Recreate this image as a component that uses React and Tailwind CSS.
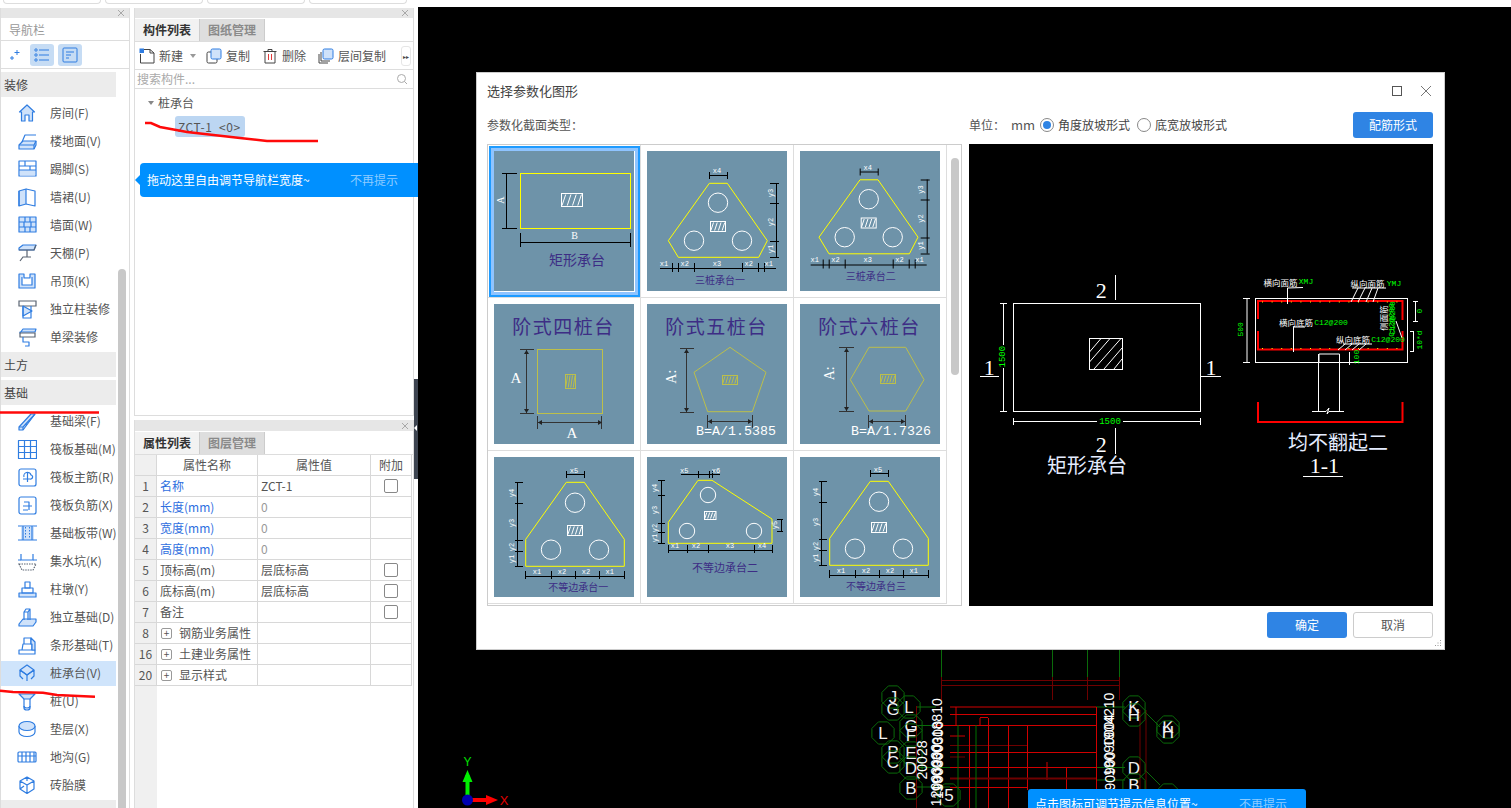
import React from "react";

const BLUE = "#2f7de1";
const LIGHT = "#cfe2fa";

function NavIcon({ name }) {
  const p = { fill: "none", stroke: BLUE, strokeWidth: 1.2, strokeLinejoin: "round" };
  const f = { fill: LIGHT, stroke: BLUE, strokeWidth: 1.2, strokeLinejoin: "round" };
  const g = { fill: "none", stroke: "#5a6472", strokeWidth: 1.2 };
  const shapes = {
    room: <path {...f} d="M10 2 L2.5 9 L4.5 9 V18 H8 V12 H12 V18 H15.5 V9 H17.5 Z" />,
    floor: <><path {...p} d="M5 11 L8 4 H19" /><path {...f} d="M2 14 L6 10 H19 V14 L17 18 H2 Z" /><path {...p} d="M2 14 H17 V18 M17 14 L19 10" /></>,
    skirt: <><rect {...p} x="2" y="2" width="17" height="15" /><rect fill={LIGHT} x="3" y="11" width="15" height="5.5" /><path {...p} d="M2 7 H19 M2 11 H19 M8 2 V7 M13 7 V11" /></>,
    dado: <><path {...f} d="M2 4 L9 2 V17 L2 19 Z" /><path {...p} d="M9 2 L18 4 V19 L9 17 M2 4 V19" /></>,
    wall: <><rect {...f} x="2" y="2" width="17" height="15" /><path {...p} d="M2 7 H19 M2 12 H19 M8 2 V7 M13 2 V7 M7 7 V12 M14 7 V12 M8 12 V17 M13 12 V17" /></>,
    ceil: <><path {...f} d="M2 5 L6 2 H19 L17 7 H2 Z" /><path {...g} d="M2 7 H17 L19 2 M10 7 V14 M3 18 L6 14 H14" /></>,
    hang: <path {...f} d="M2 3 H7 V7 H13 V3 H18 V17 H2 Z M5 6 V14 H15 V6" />,
    col: <><path {...g} d="M2 2 H19 V7 H2 Z" /><path {...f} d="M6 7 L15 12 L6 17 Z" /><path {...p} d="M6 7 V19 H14 V7" /></>,
    beamd: <><path {...f} d="M3 6 L6 2 H19 L18 5 H3 Z" /><path {...g} d="M3 6 H18 V10 H3 Z" /><path {...p} d="M6 10 V15 H12 V19 H8" /></>,
    beam: <><path {...f} d="M2 16 L14 3 H18 L6 19 H2 Z" /><path {...p} d="M6 16 L18 3 M2 16 H6 V19 M8 13 L10 14" /></>,
    raft: <><rect {...p} x="1.5" y="1.5" width="18" height="18" /><path {...p} d="M7.5 1.5 V19.5 M13.5 1.5 V19.5 M1.5 7.5 H19.5 M1.5 13.5 H19.5" /></>,
    main: <><rect {...p} x="2" y="2" width="17" height="17" rx="2" /><path {...p} d="M10.5 5 V15 M7 10 A3 3 0 0 1 14 8 A2 2 0 0 1 13 12 H6" /></>,
    neg: <><rect {...p} x="2" y="2" width="17" height="17" rx="2" /><path {...p} d="M7 7 H12 V15 M6 11 H15 M6 15 H11" /></>,
    strip: <><rect fill={LIGHT} x="4" y="4" width="13" height="13" /><path {...p} d="M1 3 H20 M1 17 H20 M6 3 V17 M15 3 V17" /><path d="M8.5 4 V16 M12.5 4 V16" stroke={BLUE} strokeDasharray="1.5 1.5" /></>,
    pit: <><path {...p} d="M4 3 V9 H16 V3" /><path {...g} d="M2 13 H19 L16 19 H5 Z" strokeDasharray="1.5 1" /><path {...p} d="M1 9 H4 M16 9 H20" /></>,
    pier: <><rect {...f} x="2" y="14" width="17" height="4" /><rect {...p} x="5" y="9" width="11" height="5" /><rect {...p} x="8" y="3" width="5" height="6" /></>,
    iso: <><path {...f} d="M2 17 L6 12 H19 V15 L16 19 H2 Z" /><path {...p} d="M7 13 V5 L9 2 H13 V13 M7 5 H11 V13 M11 5 L13 2" /></>,
    bar: <><path {...p} d="M2 15 H18 V19 H2 Z M5 15 L6 9 H15 V15 M7 9 V3 H14 V9" /><path {...f} d="M14 3 L18 7 V15 H15 V9 H14 Z" /></>,
    cap: <><path {...f} d="M10 2 L17 7 L10 12 L3 7 Z" /><path {...p} d="M3 7 V13 L6 16 M17 7 V13 L14 16 M10 12 V18 M3 7 L10 12 L17 7" /></>,
    pile: <><path {...f} d="M2 3 H18 L13 8 H7 Z" /><path {...p} d="M7 8 V17 A3 2 0 0 0 13 17 V8" /><path {...p} d="M7 15 A3 2 0 0 0 13 15" /></>,
    pad: <><path {...p} d="M2 7 V13 A8 4.5 0 0 0 18 13 V7" /><ellipse {...f} cx="10" cy="7" rx="8" ry="4.5" /></>,
    ditch: <><rect {...p} x="1" y="5" width="18" height="10" rx="1" /><path {...p} d="M1 9 H19 M5 5 V15 M9 5 V15 M13 5 V15 M17 5 V15" /></>,
    brick: <path {...p} d="M10 2 L17 6 V14 L10 18.5 L3 14 V6 Z M3 6 L10 10 L17 6 M10 10 V18.5 M10 2 V6 M3 14 L7 11" />,
  };
  return <svg viewBox="0 0 20 20" className="w-[20px] h-[20px] block shrink-0">{shapes[name]}</svg>;
}

function Section({ label, className = "" }) {
  return <div className={`w-[115px] h-[25px] bg-[#ececec] pl-[3px] text-[12px] leading-[25px] text-[#444] ${className}`}>{label}</div>;
}

function Item({ icon, label, active }) {
  return (
    <div className="h-[28px] flex items-center">
      <div className={`w-[115px] h-[25px] flex items-center overflow-hidden pl-[16px] text-[12px] text-[#555] whitespace-nowrap ${active ? "bg-[#cfe4fb]" : ""}`}>
        <NavIcon name={icon} />
        <span className="ml-[13px]">{label}</span>
      </div>
    </div>
  );
}

function Close() {
  return (
    <svg viewBox="0 0 8 8" className="w-[8px] h-[8px] block">
      <path d="M1 1 L7 7 M7 1 L1 7" stroke="#a8a8a8" strokeWidth="1" />
    </svg>
  );
}

function PanelBar({ className = "h-[10px]" }) {
  return <div className={`bg-[#e6e6e6] flex items-center justify-end pr-[4px] shrink-0 ${className}`}><Close /></div>;
}

function NavPanel() {
  const a = [["room", "房间(F)"], ["floor", "楼地面(V)"], ["skirt", "踢脚(S)"], ["dado", "墙裙(U)"], ["wall", "墙面(W)"], ["ceil", "天棚(P)"], ["hang", "吊顶(K)"], ["col", "独立柱装修"], ["beamd", "单梁装修"]];
  const b = [["beam", "基础梁(F)"], ["raft", "筏板基础(M)"], ["main", "筏板主筋(R)"], ["neg", "筏板负筋(X)"], ["strip", "基础板带(W)"], ["pit", "集水坑(K)"], ["pier", "柱墩(Y)"], ["iso", "独立基础(D)"], ["bar", "条形基础(T)"], ["cap", "桩承台(V)", true], ["pile", "桩(U)"], ["pad", "垫层(X)"], ["ditch", "地沟(G)"], ["brick", "砖胎膜"]];
  return (
    <div className="relative w-[130px] shrink-0 flex flex-col border-x border-[#ddd] overflow-hidden">
      <PanelBar />
      <div className="h-[23px] shrink-0 border-b border-[#ddd] pl-[8px] text-[12px] leading-[23px] text-[#999]">导航栏</div>
      <div className="h-[28px] shrink-0 border-b border-[#ddd] flex items-center">
        <svg viewBox="0 0 14 14" className="w-[14px] h-[14px] ml-[7px]">
          <path d="M9 2 V7 M6.5 4.5 H11.5 M4 8 V12 M2 10 H6" stroke={BLUE} strokeWidth="1" />
        </svg>
        <div className="ml-[8px] w-[24px] h-[22px] rounded-[3px] bg-[#c6dcf4] flex items-center justify-center">
          <svg viewBox="0 0 16 14" className="w-[16px] h-[14px]">
            <path d="M5 2 H15 M5 7 H15 M5 12 H15" stroke={BLUE} strokeWidth="1" />
            <circle cx="2" cy="2" r="1.2" fill="none" stroke={BLUE} />
            <circle cx="2" cy="7" r="1.2" fill="none" stroke={BLUE} />
            <circle cx="2" cy="12" r="1.2" fill="none" stroke={BLUE} />
          </svg>
        </div>
        <div className="ml-[4px] w-[24px] h-[22px] rounded-[3px] bg-[#c6dcf4] flex items-center justify-center">
          <svg viewBox="0 0 16 16" className="w-[16px] h-[16px]">
            <rect x="1" y="1" width="14" height="14" rx="1" fill="none" stroke={BLUE} />
            <path d="M4 5 H12 M4 8 H9 M4 11 H7" stroke={BLUE} />
          </svg>
        </div>
      </div>
      <div className="pt-[3px]">
        <Section label="装修" />
        <div className="mt-[2px]">{a.map(([i, l]) => <Item key={l} icon={i} label={l} />)}</div>
        <Section label="土方" className="mt-[1px]" />
        <Section label="基础" className="mt-[3px]" />
        <div className="mt-[2px]">{b.map(([i, l, s]) => <Item key={l} icon={i} label={l} active={s} />)}</div>
        <Section label="" className="mt-[1px]" />
      </div>
      <div className="absolute left-[117px] top-[261px] bottom-0 w-[8px] bg-[#c8c8c8] rounded-t-[4px]" />
    </div>
  );
}

function Tabs({ a, b }) {
  return (
    <div className="h-[23px] shrink-0 flex border-b border-[#ddd] mt-[1px]">
      <div className="w-[65px] bg-[#f2f2f2] border-r border-[#ccc] text-center text-[12px] leading-[22px] font-bold text-[#333]">{a}</div>
      <div className="w-[65px] bg-[#dedede] border-r border-[#ccc] text-center text-[12px] leading-[22px] font-bold text-[#8a8a8a]">{b}</div>
    </div>
  );
}

function Toolbar() {
  return (
    <div className="relative h-[28px] shrink-0 border-b border-[#ddd] flex items-center pl-[4px] text-[12px] text-[#555] whitespace-nowrap">
      <svg viewBox="0 0 16 16" className="w-[16px] h-[16px]">
        <path d="M4 1.5 H11 L15 5 V15 H1.5 V6" fill="none" stroke="#444" />
        <path d="M11 1.5 V5 H15" fill="none" stroke="#444" />
        <rect x="0.5" y="0.5" width="4.5" height="4.5" fill={BLUE} />
      </svg>
      <span className="ml-[4px]">新建</span>
      <span className="ml-[7px] w-0 h-0 border-x-[3px] border-x-transparent border-t-[4px] border-t-[#999]" />
      <svg viewBox="0 0 16 16" className="w-[16px] h-[16px] ml-[10px]">
        <rect x="1" y="4" width="10" height="11" rx="1.5" fill="none" stroke="#444" />
        <rect x="5" y="1" width="10" height="10" rx="1.5" fill={LIGHT} stroke={BLUE} />
      </svg>
      <span className="ml-[4px]">复制</span>
      <svg viewBox="0 0 16 16" className="w-[16px] h-[16px] ml-[12px]">
        <path d="M1.5 3.5 H14.5 M6 3.5 V1.5 H10 V3.5 M3 3.5 V15 H13 V3.5" fill="none" stroke="#444" />
        <path d="M6.5 6 V12 M9.5 6 V12" stroke="#e23b3b" />
      </svg>
      <span className="ml-[4px]">删除</span>
      <svg viewBox="0 0 16 16" className="w-[16px] h-[16px] ml-[12px]">
        <path d="M1 6 V15 H10 M3 4 V13 H12" fill="none" stroke="#444" />
        <rect x="5" y="1" width="10" height="10" rx="1.5" fill={LIGHT} stroke={BLUE} />
      </svg>
      <span className="ml-[4px]">层间复制</span>
      <div className="absolute right-[2px] top-[4px] w-[10px] h-[20px] rounded-[3px] bg-white border border-[#e6e6e6] flex items-center justify-center text-[6px] text-[#444]">▸▸</div>
    </div>
  );
}

function ComponentList() {
  return (
    <div className="relative h-[408px] shrink-0 flex flex-col border-x border-[#ddd] border-b">
      <PanelBar />
      <Tabs a="构件列表" b="图纸管理" />
      <Toolbar />
      <div className="h-[19px] shrink-0 border-b border-[#ddd] flex items-center justify-between pl-[2px] pr-[5px] text-[12px] text-[#aaa]">
        <span>搜索构件...</span>
        <svg viewBox="0 0 12 12" className="w-[12px] h-[12px]">
          <circle cx="5.5" cy="5.5" r="4" fill="none" stroke="#aaa" />
          <path d="M8.5 8.5 L11 11" stroke="#aaa" />
        </svg>
      </div>
      <div className="pl-[13px] pt-[5px] flex items-center text-[12px] text-[#555]">
        <span className="w-0 h-0 border-x-[3px] border-x-transparent border-t-[4px] border-t-[#888]" />
        <span className="ml-[4px]">桩承台</span>
      </div>
      <div className="ml-[40px] mt-[4px] w-[70px] h-[21px] rounded-[3px] bg-[#bcd6f2] pl-[3px] text-[12px] leading-[21px] text-[#555] whitespace-pre tracking-[0.6px]">ZCT-1  &lt;0&gt;</div>
      <div className="absolute left-0 top-[155px] w-[284px] h-[34px] flex items-center">
        <span className="w-0 h-0 border-y-[5px] border-y-transparent border-r-[5px] border-r-[#0090ff]" />
        <div className="flex-1 h-full bg-[#0090ff] rounded-l-[4px] flex items-center justify-between pl-[7px] pr-[21px] text-[12px] text-white">
          <span>拖动这里自由调节导航栏宽度~</span>
          <span className="text-[#8ccbff]">不再提示</span>
        </div>
      </div>
    </div>
  );
}

function PropTable() {
  const rows = [
    ["1", "名称", "ZCT-1", true, "blue", false],
    ["2", "长度(mm)", "0", false, "blue", true],
    ["3", "宽度(mm)", "0", false, "blue", true],
    ["4", "高度(mm)", "0", false, "blue", true],
    ["5", "顶标高(m)", "层底标高", true, "", false],
    ["6", "底标高(m)", "层底标高", true, "", false],
    ["7", "备注", "", true, "", false],
    ["8", "钢筋业务属性", "", false, "plus", false],
    ["16", "土建业务属性", "", false, "plus", false],
    ["20", "显示样式", "", false, "plus", false],
  ];
  const cell = "border-b border-r border-[#d8d8d8] h-[21px] flex items-center";
  return (
    <div className="flex-1 min-h-0 flex flex-col border-x border-[#ddd]">
      <PanelBar className="h-[11px]" />
      <Tabs a="属性列表" b="图层管理" />
      <div className="w-[277px] grid grid-cols-[22px_101px_113px_41px] text-[12px] text-[#555]">
        <div className={`${cell} bg-[#f0f0f0]`} />
        <div className={`${cell} justify-center`}>属性名称</div>
        <div className={`${cell} justify-center`}>属性值</div>
        <div className={`${cell} justify-center`}>附加</div>
        {rows.map(([n, name, val, chk, kind, dim]) => (
          <React.Fragment key={n}>
            <div className={`${cell} bg-[#f0f0f0] justify-center`}>{n}</div>
            <div className={`${cell} pl-[3px] ${kind === "blue" ? "text-[#2f6fe0]" : ""}`}>
              {kind === "plus" && <span className="w-[11px] h-[11px] mr-[7px] ml-[1px] border border-[#999] rounded-[2px] flex items-center justify-center text-[10px] leading-none">+</span>}
              {name}
            </div>
            <div className={`${cell} pl-[3px] ${dim ? "text-[#999]" : ""}`}>{val}</div>
            <div className={`${cell} justify-center`}>{chk && <span className="w-[14px] h-[14px] border border-[#888] rounded-[2px] bg-white" />}</div>
          </React.Fragment>
        ))}
      </div>
      <div className="w-[22px] flex-1 bg-[#f0f0f0]" />
    </div>
  );
}

const Y = "#ffff00";
const DY = "#bcbf4a";
const NAVY = "#3d2d85";
const SONG = "'Liberation Serif','Noto Sans CJK SC',serif";
const MONO = "'Liberation Mono',monospace";

function Lines({ d, c = "#000", w = 1 }) {
  return d.map((l, i) => <line key={i} x1={l[0]} y1={l[1]} x2={l[2]} y2={l[3]} stroke={c} strokeWidth={w} />);
}
function T({ x, y, s = 7, c = "#fff", r, f = MONO, children, ...rest }) {
  return (
    <text x={x} y={y} fontSize={s} fill={c} fontFamily={f} textAnchor="middle" dominantBaseline="central" transform={r ? `rotate(${r} ${x} ${y})` : undefined} {...rest}>
      {children}
    </text>
  );
}
function Hatch({ x, y, w, h, c = "#fff", n = 3 }) {
  const step = w / (n + 1);
  const ls = [];
  for (let i = 1; i <= n + 1; i++) ls.push([x + step * i - step * 0.2, y + 1, x + step * i - step * 0.9, y + h - 1]);
  return (
    <>
      <rect x={x} y={y} width={w} height={h} fill="none" stroke={c} />
      <Lines d={ls} c={c} />
    </>
  );
}
function Circles({ d, r = 9.7 }) {
  return d.map((p, i) => <circle key={i} cx={p[0]} cy={p[1]} r={r} fill="none" stroke="#fff" />);
}
function Poly({ p, c = Y }) {
  return <polygon points={p} fill="none" stroke={c} />;
}
function Thumb({ children }) {
  return <svg viewBox="0 0 140 140" className="w-[140px] h-[140px] block bg-[#6e93a9]">{children}</svg>;
}

function T1() {
  return (
    <Thumb>
      <rect x="26.5" y="22.5" width="110" height="55" fill="none" stroke={Y} />
      <Hatch x={67.5} y={42.5} w={21} h={13} />
      <Lines d={[[12.5, 22, 12.5, 77], [8, 22.5, 23, 22.5], [8, 77.5, 23, 77.5], [26, 91.5, 137, 91.5], [26.5, 82, 26.5, 96], [136.5, 82, 136.5, 96]]} />
      <T x={6} y={49} s={10} r={-90} f={SONG}>A</T>
      <T x={80.7} y={84} s={10} f={SONG}>B</T>
      <T x={83} y={108} s={14} c={NAVY} f="'Noto Sans CJK SC',sans-serif">矩形承台</T>
    </Thumb>
  );
}
function ThreePile({ title }) {
  return (
    <>
      <Poly p="62.3,32.3 80.3,32.3 120.3,89.7 111.7,106.3 31.3,106.3 21.3,89.7" />
      <Circles d={[[71, 51.7], [47, 89.7], [95, 89.7]]} />
      <Hatch x={63.5} y={70.5} w={15} h={10} />
      <Lines d={[[62.5, 24.5, 80.5, 24.5], [62.5, 21, 62.5, 28], [80.5, 21, 80.5, 28], [129.5, 32, 129.5, 106], [123, 32.5, 132, 32.5], [123, 52.5, 132, 52.5], [123, 90.5, 132, 90.5], [123, 106.5, 132, 106.5], [13, 117.5, 129, 117.5], [25.5, 112, 25.5, 121], [31.5, 112, 31.5, 121], [47.5, 112, 47.5, 121], [95.5, 112, 95.5, 121], [111.5, 112, 111.5, 121], [117.5, 112, 117.5, 121]]} />
      <T x={70} y={20}>x4</T>
      <T x={123.7} y={42} r={-90}>y3</T>
      <T x={123.7} y={71} r={-90}>y2</T>
      <T x={123.7} y={98} r={-90}>y1</T>
      <T x={17} y={112.7}>x1</T>
      <T x={37.7} y={112.7}>x2</T>
      <T x={70} y={112.7}>x3</T>
      <T x={101.7} y={112.7}>x2</T>
      <T x={121.7} y={112.7}>x1</T>
      <T x={73} y={128} s={10} c={NAVY} f="'Noto Sans CJK SC',sans-serif">{title}</T>
    </>
  );
}
function T2() {
  return <Thumb><ThreePile title="三桩承台一" /></Thumb>;
}
function T3() {
  return <Thumb><g transform="translate(-2.3 -3.5)"><ThreePile title="三桩承台二" /></g></Thumb>;
}
function Head({ children }) {
  return <T x={69.5} y={21.7} s={19} c={NAVY} f="'Noto Sans CJK SC',sans-serif" letterSpacing="1.5">{children}</T>;
}
function Arrows({ d }) {
  return d.map((p, i) => <polygon key={i} points={p} fill="#222" />);
}
function T4() {
  return (
    <Thumb>
      <Head>阶式四桩台</Head>
      <rect x="43.5" y="45.5" width="65" height="64" fill="none" stroke={DY} />
      <Hatch x={71.5} y={70.5} w={10} h={14} c={DY} n={3} />
      <Lines c="#333" d={[[32.5, 46, 32.5, 109], [26, 45.5, 40, 45.5], [26, 109.5, 40, 109.5], [44, 118.5, 108, 118.5], [43.5, 112, 43.5, 125], [107.5, 112, 107.5, 125]]} />
      <Arrows d={["32.5,46 30,50 35,50", "32.5,109 30,105 35,105", "44,118.5 48,116 48,121", "108,118.5 104,116 104,121"]} />
      <T x={22} y={74} s={15} f={SONG}>A</T>
      <T x={78} y={129} s={15} f={SONG}>A</T>
    </Thumb>
  );
}
function T5() {
  return (
    <Thumb>
      <Head>阶式五桩台</Head>
      <Poly c={DY} p="83,43.3 119,68.3 105.3,107.7 60.7,107.7 47,68.3" />
      <Hatch x={75.5} y={71.5} w={15} h={9} c={DY} n={4} />
      <Lines c="#333" d={[[39.5, 45, 39.5, 108], [33, 44.5, 47, 44.5], [33, 108.5, 47, 108.5], [61, 117.5, 105, 117.5], [60.5, 111, 60.5, 124], [105.5, 111, 105.5, 124]]} />
      <Arrows d={["39.5,45 37,49 42,49", "39.5,108 37,104 42,104", "61,117.5 65,115 65,120", "105,117.5 101,115 101,120"]} />
      <T x={24.7} y={72.7} s={14} r={-90} f={SONG}>A:</T>
      <T x={89} y={127.5} s={13.3}>B=A/1.5385</T>
    </Thumb>
  );
}
function T6() {
  return (
    <Thumb>
      <Head>阶式六桩台</Head>
      <Poly c={DY} p="69,43.3 105.7,43.3 124,75.7 105.7,107 69,107 50.3,75.7" />
      <Hatch x={80.5} y={70.5} w={15} h={9} c={DY} n={4} />
      <Lines c="#333" d={[[46.5, 44, 46.5, 107], [39, 43.5, 54, 43.5], [39, 107.5, 54, 107.5], [69, 117.5, 105, 117.5], [68.5, 111, 68.5, 124], [105.5, 111, 105.5, 124]]} />
      <Arrows d={["46.5,44 44,48 49,48", "46.5,107 44,103 49,103", "69,117.5 73,115 73,120", "105,117.5 101,115 101,120"]} />
      <T x={30} y={69.3} s={14} r={-90} f={SONG}>A:</T>
      <T x={91} y={127.5} s={13.3}>B=A/1.7326</T>
    </Thumb>
  );
}
function Uneven({ title, tx, ty, hx, hy }) {
  return (
    <>
      <Poly p="72.3,25.3 90.3,25.3 130.3,82.3 130.3,109.3 31.7,109.3 31.7,82.3" />
      <Circles d={[[81, 45.7], [57, 92.7], [105, 92.7]]} />
      <Hatch x={hx} y={hy} w={15} h={10} />
      <Lines d={[[72.5, 17.5, 90.5, 17.5], [72.5, 14, 72.5, 21], [90.5, 14, 90.5, 21], [23.5, 25, 23.5, 109], [21, 25.5, 29, 25.5], [21, 46.5, 29, 46.5], [21, 83.5, 29, 83.5], [21, 94.5, 29, 94.5], [21, 109.5, 29, 109.5], [32, 119.5, 130, 119.5], [31.5, 114, 31.5, 122], [57.5, 114, 57.5, 122], [81.5, 114, 81.5, 122], [105.5, 114, 105.5, 122], [130.5, 114, 130.5, 122]]} />
      <T x={80} y={14.2}>x5</T>
      <T x={17.7} y={36} r={-90}>y4</T>
      <T x={17.7} y={66} r={-90}>y3</T>
      <T x={17.7} y={90} r={-90}>y2</T>
      <T x={17.7} y={102} r={-90}>y1</T>
      <T x={43} y={114.7}>x1</T>
      <T x={68} y={114.7}>x2</T>
      <T x={92} y={114.7}>x2</T>
      <T x={115.7} y={114.7}>x1</T>
      <T x={tx} y={ty} s={10} c={NAVY} f="'Noto Sans CJK SC',sans-serif">{title}</T>
    </>
  );
}
function T7() {
  return <Thumb><Uneven title="不等边承台一" tx={84.3} ty={129.7} hx={73.5} hy={68.5} /></Thumb>;
}
function T8() {
  return (
    <Thumb>
      <Poly p="51,23.3 65,23.3 125,62 125,86.3 21.3,86.3 21.3,65.3" />
      <Circles r={7.7} d={[[61, 38], [40, 74], [107, 74]]} />
      <Hatch x={57.5} y={54.5} w={11.5} h={8} />
      <Lines d={[[34, 17.5, 73, 17.5], [51.5, 14, 51.5, 21], [62.5, 14, 62.5, 21], [65.5, 14, 65.5, 21], [14.5, 23, 14.5, 86], [11, 23.5, 18, 23.5], [11, 38.5, 18, 38.5], [11, 66.5, 18, 66.5], [11, 75.5, 18, 75.5], [11, 86.5, 18, 86.5], [134.5, 62, 134.5, 74], [130, 62.5, 136, 62.5], [130, 74.5, 136, 74.5], [21, 93.5, 125, 93.5], [21.5, 88, 21.5, 96], [40.5, 88, 40.5, 96], [61.5, 88, 61.5, 96], [107.5, 88, 107.5, 96], [125.5, 88, 125.5, 96]]} />
      <T x={37.3} y={13.7}>x5</T>
      <T x={69} y={13.7}>x6</T>
      <T x={8} y={31} r={-90}>y4</T>
      <T x={8} y={53} r={-90}>y3</T>
      <T x={8} y={71} r={-90}>y2</T>
      <T x={8} y={81} r={-90}>y1</T>
      <T x={128} y={68} r={-90}>y5</T>
      <T x={28} y={89}>x1</T>
      <T x={49} y={89}>x2</T>
      <T x={83} y={89}>x3</T>
      <T x={115} y={89}>x4</T>
      <T x={78} y={110.3} s={11} c={NAVY} f="'Noto Sans CJK SC',sans-serif">不等边承台二</T>
    </Thumb>
  );
}
function T9() {
  return <Thumb><g transform="translate(-2 -1)"><Uneven title="不等边承台三" tx={78} ty={129.7} hx={73.5} hy={66.5} /></g></Thumb>;
}

function Preview() {
  const G = "#00ff00";
  const R = "#ff0000";
  const CJK = "'Noto Sans CJK SC',sans-serif";
  const dots = [];
  for (let x = 1262; x < 1402; x += 9.6) {
    dots.push(<rect key={"a" + x} x={x} y={301.5} width="1" height="1" fill={Y} />);
    dots.push(<rect key={"b" + x} x={x} y={348} width="1" height="1" fill={Y} />);
  }
  return (
    <svg viewBox="969 144 464 462" className="w-[464px] h-[462px] block bg-black">
      <rect x="1013.5" y="303.5" width="187" height="108" fill="none" stroke="#fff" />
      <rect x="1089.5" y="338.5" width="33" height="31" fill="none" stroke="#fff" />
      <Lines c="#fff" d={[[1089.5, 352, 1101, 338.5], [1089.5, 362, 1110, 338.5], [1094, 369, 1121, 338.5], [1104, 369, 1122, 348], [1114, 369, 1122, 359]]} />
      <Lines c="#fff" d={[[1115.5, 275, 1115.5, 300], [980, 376.5, 999, 376.5], [1201, 376.5, 1221, 376.5], [1115.5, 428, 1115.5, 454], [1003.5, 303, 1003.5, 345], [1003.5, 368, 1003.5, 412], [1000, 303.5, 1007, 303.5], [1000, 411.5, 1007, 411.5], [1013, 421.5, 1097, 421.5], [1123, 421.5, 1201, 421.5], [1013.5, 418, 1013.5, 425], [1200.5, 418, 1200.5, 425]]} />
      <T x={1101.3} y={290} s={22} f={SONG}>2</T>
      <T x={989.3} y={367} s={22} f={SONG}>1</T>
      <T x={1211} y={367} s={22} f={SONG}>1</T>
      <T x={1101.3} y={444} s={22} f={SONG}>2</T>
      <T x={1003.5} y={356.7} s={9} c={G} r={-90}>1500</T>
      <T x={1110} y={422} s={9} c={G}>1500</T>
      <T x={1087} y={464} s={20} c="#e4ecff" f={CJK}>矩形承台</T>

      <rect x="1255.5" y="298.5" width="152" height="64" fill="none" stroke="#fff" />
      <path d="M1258 319 V301 H1402.5 V320 M1258 331 V349.5 H1402.5 V331" fill="none" stroke={R} strokeWidth="2" />
      {dots}
      <path d="M1319 362 V354 H1339.5 V411" fill="none" stroke="#fff" />
      <path d="M1318.5 354 V411.5 M1312 411.5 H1326 L1329 408 L1327 414 L1329 411.5 H1344" fill="none" stroke="#fff" />
      <path d="M1258 402 V422 H1402.5 V402" fill="none" stroke={R} strokeWidth="2" />
      <Lines c="#fff" d={[[1287.5, 288, 1303, 287.5], [1287.5, 288, 1287.5, 304], [1352, 288, 1386, 288], [1358, 288, 1351, 302], [1365, 288, 1358, 302], [1372, 288, 1366, 302], [1378, 288, 1373, 302], [1293, 327, 1305, 327], [1293.5, 327, 1293.5, 352], [1343, 344, 1372, 344], [1345, 344, 1338, 350], [1352, 344, 1345, 350], [1359, 344, 1352, 350], [1366, 344, 1359, 350], [1396, 321, 1402, 338], [1243, 298.5, 1250, 298.5], [1243, 362.5, 1250, 362.5], [1247, 299, 1247, 362], [1413, 301.5, 1418, 301.5], [1413, 321.5, 1418, 321.5], [1415.5, 302, 1415.5, 321], [1410, 331.5, 1414, 331.5], [1410, 351.5, 1414, 351.5], [1413.5, 332, 1413.5, 351], [1349.5, 352, 1349.5, 365]]} />
      <T x={1280.5} y={281.7} s={8.5} f={CJK}>横向面筋</T>
      <T x={1306} y={281.7} s={8} c={G}>XMJ</T>
      <T x={1367.5} y={283} s={8.5} f={CJK}>纵向面筋</T>
      <T x={1394} y={283} s={8} c={G}>YMJ</T>
      <T x={1296} y={322} s={8.5} f={CJK}>横向底筋</T>
      <T x={1331} y={322} s={8} c={G}>C12@200</T>
      <T x={1353} y={339} s={8.5} f={CJK}>纵向底筋</T>
      <T x={1388} y={339} s={8} c={G}>C12@200</T>
      <T x={1383} y={318} s={8.5} r={-90} f={CJK}>侧面筋</T>
      <T x={1392} y={318} s={8} c={G} r={-90}>C12@200</T>
      <T x={1391} y={320} s={8} c={G} r={-90}>C12@200</T>
      <T x={1241} y={329.3} s={8} c={G} r={-90}>500</T>
      <T x={1419.3} y={311} s={8} c={G} r={-90}>0</T>
      <T x={1419.3} y={340} s={8} c={G} r={-90}>10*d</T>
      <T x={1356.3} y={357} s={8} c={G} r={-90}>100</T>
      <T x={1338} y={441.7} s={20} c="#e4ecff" f={CJK}>均不翻起二</T>
      <T x={1324.3} y={465} s={22} f={SONG}>1-1</T>
      <Lines c="#fff" d={[[1303, 476.5, 1343, 476.5]]} />
    </svg>
  );
}

function Cell({ selected, children }) {
  return (
    <div className="relative w-[153px] h-[153px] pl-[6px] pt-[6px] border-r border-b border-[#ddd]">
      {children}
      {selected && <div className="absolute left-[1px] top-[1px] right-0 bottom-0 border-2 border-[#1e9bff]"><div className="w-full h-full border-[3px] border-[#8fc4ff]" /></div>}
    </div>
  );
}

function Radio({ on, label }) {
  return (
    <div className="flex items-center">
      <span className="w-[14px] h-[14px] rounded-full border border-[#888] bg-white flex items-center justify-center">
        {on && <span className="w-[8px] h-[8px] rounded-full bg-[#2f84e4]" />}
      </span>
      <span className="ml-[4px] text-[12px] text-[#444]">{label}</span>
    </div>
  );
}

function Dialog() {
  return (
    <div className="absolute left-[58px] top-[65px] w-[969px] h-[578px] bg-white border border-[#ccc] flex flex-col">
      <div className="h-[37px] shrink-0 flex items-center justify-between pl-[10px] pr-[12px] pb-[2px]">
        <span className="text-[13px] text-[#444]">选择参数化图形</span>
        <div className="flex items-center gap-[18px]">
          <span className="w-[10px] h-[10px] border border-[#555]" />
          <svg viewBox="0 0 12 12" className="w-[12px] h-[12px] block"><path d="M1 1 L11 11 M11 1 L1 11" stroke="#777" strokeWidth="1" /></svg>
        </div>
      </div>
      <div className="h-[30px] shrink-0 flex items-center pl-[10px] pr-[11px] text-[12px] text-[#555]">
        <span className="w-[482px]">参数化截面类型：</span>
        <span>单位：</span>
        <span className="ml-[6px] mr-[5px] text-[13px]">mm</span>
        <Radio on label="角度放坡形式" />
        <div className="w-[7px]" />
        <Radio label="底宽放坡形式" />
        <button className="ml-auto w-[80px] h-[26px] rounded-[3px] bg-[#2f84e4] text-white text-[12px]">配筋形式</button>
      </div>
      <div className="mt-[4px] pl-[10px] flex shrink-0">
        <div className="w-[475px] h-[462px] border border-[#ccc] flex overflow-hidden">
          <div className="grid grid-cols-[153px_153px_153px] content-start">
            <Cell selected><T1 /></Cell>
            <Cell><T2 /></Cell>
            <Cell><T3 /></Cell>
            <Cell><T4 /></Cell>
            <Cell><T5 /></Cell>
            <Cell><T6 /></Cell>
            <Cell><T7 /></Cell>
            <Cell><T8 /></Cell>
            <Cell><T9 /></Cell>
          </div>
          <div className="pl-[4px] pt-[13px]"><div className="w-[8px] h-[217px] rounded-full bg-[#c8c8c8]" /></div>
        </div>
        <div className="ml-[7px]"><Preview /></div>
      </div>
      <div className="pt-[6px] pr-[11px] flex justify-end gap-[6px] text-[12px]">
        <button className="w-[80px] h-[26px] rounded-[3px] bg-[#2f84e4] text-white">确定</button>
        <button className="w-[80px] h-[26px] rounded-[3px] bg-white border border-[#ccc] text-[#555]">取消</button>
      </div>
      <svg viewBox="0 0 8 8" className="absolute right-[2px] bottom-[2px] w-[8px] h-[8px]">
        <path d="M6.5 1 V2 M6.5 3.5 V4.5 M6.5 6 V7 M4 3.5 V4.5 M4 6 V7 M1.5 6 V7" stroke="#999" />
      </svg>
    </div>
  );
}

function CadBackdrop() {
  const R = "#d00000";
  const DR = "#6e0000";
  const GR = "#0a6a0a";
  const oct = (cx, cy, r = 12) => {
    const pts = [];
    for (let i = 0; i < 8; i++) {
      const a = (Math.PI / 4) * i + Math.PI / 8;
      pts.push(`${(cx + r * Math.cos(a)).toFixed(1)},${(cy + r * Math.sin(a)).toFixed(1)}`);
    }
    return pts.join(" ");
  };
  const marks = [["J", 893, 697], ["G", 893, 709], ["L", 909, 707], ["G", 911, 726], ["L", 883, 733], ["F", 911, 735], ["E", 911, 753], ["P", 893, 752], ["C", 893, 762], ["D", 911, 768], ["B", 911, 788], ["5", 949, 795], ["K", 1134, 707], ["H", 1134, 715], ["K", 1168, 727], ["H", 1168, 732], ["D", 1134, 768], ["B", 1134, 785], ["", 1168, 795]];
  const vt = [[937, 745, "190030018810"], [938, 760, "1900300300"], [936, 775, "12003000"], [922, 760, "20028"], [1109, 720, "1904210"], [1109, 745, "19090004"], [1110, 775, "190900"]];
  return (
    <svg viewBox="418 7 1093 801" className="absolute inset-0 w-full h-full">
      <Lines c={GR} d={[[941.5, 650, 941.5, 677], [1052.5, 650, 1052.5, 677], [1087.5, 650, 1087.5, 677], [1119.5, 650, 1119.5, 677], [916, 707, 936, 707], [916, 725.5, 950, 725.5], [1096, 707, 1125, 707], [1096, 767.5, 1125, 767.5], [916, 767.5, 950, 767.5], [916, 787, 950, 787], [1096, 780, 1125, 780], [1145, 712, 1160, 727], [1145, 770, 1160, 785]]} />
      <Lines c={DR} d={[[941.5, 677, 941.5, 700], [1052.5, 677, 1052.5, 700], [1087.5, 677, 1087.5, 700], [1119.5, 677, 1119.5, 700], [942, 680.5, 1119, 680.5], [942, 685.5, 1119, 685.5], [916.5, 706, 916.5, 808], [1140, 710, 1140, 800], [1146, 710, 1146, 800], [950, 745.5, 1027, 745.5], [950, 757, 965, 757]]} />
      <Lines c={R} d={[[950, 707, 1096, 707], [950, 714.5, 1096, 714.5], [935, 725.5, 1096, 725.5], [950, 736, 965, 736], [950, 752.5, 1096, 752.5], [950, 767.5, 1096, 767.5], [950, 787.5, 1028, 787.5], [969.5, 725, 969.5, 808], [988.5, 718, 988.5, 808], [1008.5, 725, 1008.5, 808], [1027.5, 725, 1027.5, 790], [1096.5, 707, 1096.5, 790], [1066.5, 767, 1066.5, 790], [1047, 762, 1047, 780], [956, 707, 956, 725], [980, 725, 980, 718], [980, 717.5, 988, 717.5]]} />
      <Lines c={DR} w={2} d={[[950, 778.5, 1096, 778.5]]} />
      <Lines c="#007000" d={[[958, 725, 958, 808], [976, 725, 976, 808]]} />
      {marks.map(([l, x, y], i) => (
        <g key={i}>
          <polygon points={oct(x, y)} fill="none" stroke={GR} />
          <T x={x} y={y} s={17} f="'Liberation Sans',sans-serif" c="#f0f0f0">{l}</T>
        </g>
      ))}
      {vt.map(([x, y, s], i) => <T key={i} x={x} y={y} s={14} f="'Liberation Sans',sans-serif" r={-90}>{s}</T>)}
      <line x1="467.5" y1="800" x2="467.5" y2="775" stroke="#00f000" strokeWidth="4" />
      <polygon points="467.5,770 462.5,782 472.5,782" fill="#00f000" />
      <T x={467.5} y={762} s={12} c="#00e000" f="'Liberation Sans',sans-serif">Y</T>
      <line x1="470" y1="800" x2="488" y2="800" stroke="#ff0000" strokeWidth="4" />
      <polygon points="498,800 486,795 486,805" fill="#ff0000" />
      <T x={504} y={800} s={13} c="#e00000" f="'Liberation Sans',sans-serif">X</T>
      <circle cx="467.5" cy="800" r="5.5" fill="#0000b0" />
    </svg>
  );
}

export default function App() {
  return (
    <div className="relative w-[1511px] h-[808px] bg-white overflow-hidden flex flex-col font-['Noto_Sans_CJK_SC','Noto_Sans',sans-serif]">
      <div className="h-[7px] shrink-0 flex items-start gap-[4px] pl-[3px]">
        {[0, 1, 2, 3].map((i) => <div key={i} className="w-[98px] h-[4px] bg-white border-x border-b border-[#ddd] rounded-b-[4px]" />)}
      </div>
      <div className="flex-1 min-h-0 flex">
        <div className="pt-[1px] flex"><NavPanel /></div>
        <div className="ml-[4px] w-[280px] shrink-0 pt-[1px] flex flex-col gap-[4px]">
          <ComponentList />
          <PropTable />
        </div>
        <div className="w-[4px] shrink-0 pt-[372px]">
          <div className="h-[100px] bg-[#3d4450] flex items-center pb-[2px]">
            <span className="w-0 h-0 border-y-[3px] border-y-transparent border-r-[3px] border-r-white" />
          </div>
        </div>
        <div className="relative flex-1 bg-black overflow-hidden">
          <CadBackdrop />
          <Dialog />
          <div className="absolute left-[610px] top-[782px] w-[278px] h-[30px] rounded-[3px] bg-[#0090ff] flex items-center justify-between pl-[7px] pr-[19px] text-[12px] text-white">
            <span>点击图标可调节提示信息位置~</span>
            <span className="text-[#8ccbff]">不再提示</span>
          </div>
        </div>
      </div>
      <svg viewBox="0 0 1511 808" className="absolute inset-0 w-full h-full pointer-events-none">
        <path d="M145 123 L151 123 L160 127 L187 132 L240 138 L267 141 L318 141" fill="none" stroke="#ff0a0a" strokeWidth="2.5" />
        <path d="M0 412.5 H99" fill="none" stroke="#ff0a0a" strokeWidth="2.5" />
        <path d="M0 690.7 L13 692 L43 692.7 L57 695 L95 696.7" fill="none" stroke="#ff0a0a" strokeWidth="2.5" />
      </svg>
    </div>
  );
}
